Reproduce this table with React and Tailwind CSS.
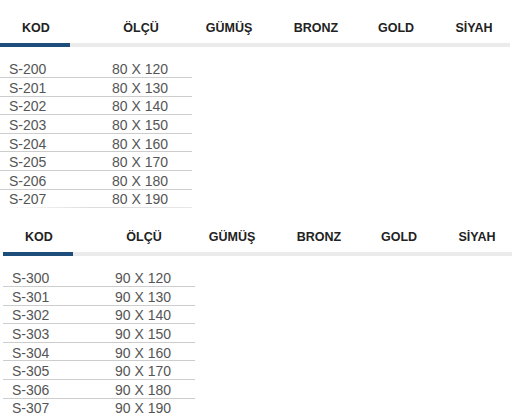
const HEADERS = [
  { label: 'GÜMÜŞ' },
  { label: 'BRONZ' },
  { label: 'GOLD' },
  { label: 'SİYAH' },
];

const TABLES = [
  {
    prefix: 'S-2',
    width: 80,
    rows: ['00', '01', '02', '03', '04', '05', '06', '07'],
    shift: '',
  },
  {
    prefix: 'S-3',
    width: 90,
    rows: ['00', '01', '02', '03', '04', '05', '06', '07'],
    shift: 'ml-[3px]',
  },
];

function SizeTable({ table }) {
  return (
    <div className={`h-[209px] ${table.shift}`}>
      {/* header */}
      <div className="grid grid-cols-[88px_106px_70px_104px_56px_100px] h-[43px] items-center pt-[13px] text-[12.5px] font-bold text-[#222]">
        <div className="pl-[22px]">KOD</div>
        <div className="text-center">ÖLÇÜ</div>
        {HEADERS.map((h) => (
          <div key={h.label} className="text-center">{h.label}</div>
        ))}
      </div>
      <div className="flex h-[4px] w-[510px] bg-[#ebebeb]">
        <div className="w-[70px] bg-[#1d4e7b]" />
      </div>
      <div className="pt-[12.5px] w-[192px]">
        {table.rows.map((r, i) => {
          const last = i === table.rows.length - 1;
          return (
            <div key={r} className="relative grid grid-cols-[88px_104px] h-[18.6px] items-center text-[14px] leading-none text-[#555]">
              <div className="pl-[9px] pt-[1px]">{table.prefix + r}</div>
              <div className="text-center pt-[1px]">{table.width} X {120 + i * 10}</div>
              <div
                className={
                  last
                    ? 'absolute left-0 right-0 bottom-0 h-px bg-gradient-to-r from-transparent via-[#dcdcdc] to-[#e8e8e8]'
                    : 'absolute left-0 right-0 bottom-0 h-px bg-[#cdcdcd]'
                }
              />
            </div>
          );
        })}
      </div>
    </div>
  );
}

export default function App() {
  return (
    <div className="w-[512px] h-[415px] overflow-hidden bg-white font-['Liberation_Sans',Arial,sans-serif]">
      {TABLES.map((t) => (
        <SizeTable key={t.prefix} table={t} />
      ))}
    </div>
  );
}
